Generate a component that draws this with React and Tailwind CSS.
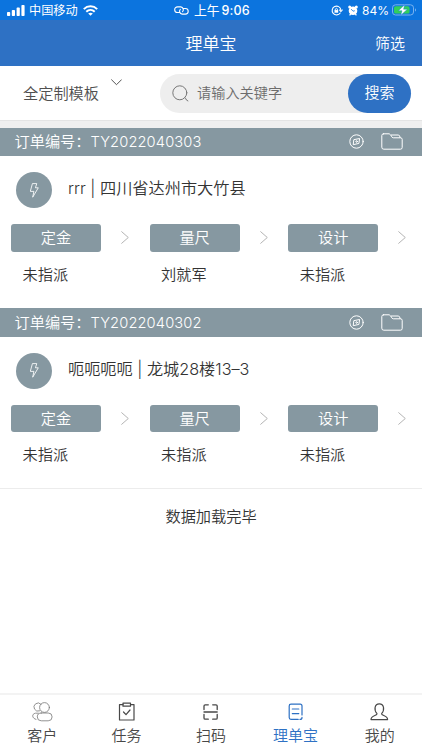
import React from "react";

const svgBase = { fill: "none", stroke: "currentColor", strokeLinecap: "round", strokeLinejoin: "round" };

function StatusBar() {
  return (
    <div className="flex h-5 shrink-0 items-center bg-[#0c74de] text-[12px] leading-5 text-white">
      <div className="flex w-[174px] items-center pl-[7px]">
        <svg className="h-[11px] w-[18px]" viewBox="0 0 18 11" fill="currentColor">
          <rect x="0" y="7" width="3.2" height="4" rx="0.8" />
          <rect x="4.8" y="5" width="3.2" height="6" rx="0.8" />
          <rect x="9.6" y="2.6" width="3.2" height="8.4" rx="0.8" />
          <rect x="14.4" y="0" width="3.2" height="11" rx="0.8" />
        </svg>
        <span className="ml-[4px] pt-px text-[12.2px] font-normal">中国移动</span>
        <svg className="ml-[5px] h-[11px] w-[15px]" viewBox="0 0 15 11" fill="none" stroke="currentColor" strokeWidth="2">
          <path d="M0.8 4.1C4.6 0.4 10.4 0.4 14.2 4.1" />
          <path d="M3.3 6.7C5.7 4.4 9.3 4.4 11.7 6.7" />
          <path d="M7.5 10.8L5.2 8.6C6.5 7.5 8.5 7.5 9.8 8.6Z" fill="currentColor" stroke="none" />
        </svg>
      </div>
      <svg className="h-[9px] w-[15px]" viewBox="0 0 15 9" {...svgBase} strokeWidth="1.1">
        <path d="M5.6 6.5H3.5A2.8 2.8 0 0 1 3.5 0.9H6.8A2.8 2.8 0 0 1 8.6 5.6" />
        <path d="M9.4 2.5H11.4A2.8 2.8 0 0 1 11.4 8.1H8.1A2.8 2.8 0 0 1 6.3 3.4" />
      </svg>
      <span className="ml-[5px] pt-px text-[12.8px] font-normal">上午</span>
      <span className="ml-[2px] pt-px font-['Inter'] text-[12.5px] font-medium tracking-[0.1px]">9:06</span>
      <div className="ml-auto flex items-center pr-[5px]">
        <svg className="h-[11px] w-[12px]" viewBox="0 0 12 11" {...svgBase} strokeWidth="1.1">
          <path d="M9.2 8A4.4 4.4 0 1 1 9.9 4.8" />
          <path d="M8.6 5L10 6.5L11.3 5" />
          <rect x="3.8" y="5.1" width="3.2" height="2.4" fill="currentColor" strokeWidth="0.4" />
          <path d="M4.4 5V4.1A1.1 1.1 0 0 1 6.5 4.1V5" strokeWidth="0.8" />
        </svg>
        <svg className="ml-[5px] h-[11px] w-[10px]" viewBox="0 0 10 11" fill="currentColor">
          <circle cx="5" cy="5.8" r="4.3" />
          <circle cx="1.7" cy="1.9" r="1.5" />
          <circle cx="8.3" cy="1.9" r="1.5" />
          <path d="M1.6 10.4L2.7 8.8M8.4 10.4L7.3 8.8" stroke="currentColor" strokeWidth="1.2" />
          <path d="M3.2 4.1L5 6.2L6.8 5.7" fill="none" stroke="#0c74de" strokeWidth="0.8" />
        </svg>
        <span className="ml-[4px] pt-px font-['Inter'] text-[12px] font-normal">84%</span>
        <svg className="ml-[3px] h-[12px] w-[25px]" viewBox="0 0 25 12">
          <rect x="0.5" y="0.8" width="21" height="10.2" rx="3" fill="none" stroke="#78b2ef" />
          <rect x="2" y="2.3" width="15.5" height="7.2" rx="1.6" fill="#32cf5b" />
          <path d="M23 4.2C24.4 4.8 24.4 7 23 7.6Z" fill="#78b2ef" />
          <path d="M12.6 0.8L6.4 6.7H10L8.8 11.2L15.4 5.2H11.6Z" fill="#fff" stroke="#0c74de" strokeWidth="0.4" />
        </svg>
      </div>
    </div>
  );
}

function Header() {
  return (
    <div className="grid h-[46px] shrink-0 grid-cols-[1fr_auto_1fr] items-center bg-[#2e71c4] text-white">
      <span />
      <h1 className="pt-[3px] text-[17px] leading-6">理单宝</h1>
      <span className="pt-[2px] pr-[17px] text-right text-[15px] leading-6">筛选</span>
    </div>
  );
}

function SearchRow() {
  return (
    <div className="flex h-[55px] shrink-0 items-center border-b border-[#e4e4e4] bg-white">
      <span className="ml-[23px] w-[76px] whitespace-nowrap pt-[2px] text-[15.2px] text-[#505050]">全定制模板</span>
      <svg className="ml-[12px] mb-[22px] h-[7px] w-[11px] text-[#555]" viewBox="0 0 11 7" {...svgBase} strokeWidth="1">
        <path d="M0.6 0.8L5.5 5.7L10.4 0.8" />
      </svg>
      <div className="ml-[38px] flex h-[39px] w-[251px] items-center rounded-full bg-[#eee]">
        <svg className="ml-[12px] h-[17px] w-[17px] text-[#777]" viewBox="0 0 17 17" {...svgBase} strokeWidth="1">
          <circle cx="7.8" cy="7.8" r="7" />
          <path d="M12.9 12.7Q14.2 13.4 14.4 15L15.9 15.9" />
        </svg>
        <span className="ml-[8px] pt-[2px] text-[14.2px] text-[#6c6c6c]">请输入关键字</span>
        <button className="ml-auto h-[39px] w-[63px] rounded-full bg-[#2e71c4] pt-px text-[15px] text-white">搜索</button>
      </div>
    </div>
  );
}

function Chevron() {
  return (
    <svg className="h-[13px] w-[8px] text-[#b4b4b4]" viewBox="0 0 8 13" {...svgBase} strokeWidth="1">
      <path d="M0.7 0.7L7.3 6.5L0.7 12.3" />
    </svg>
  );
}

function Order({ no, title, owners, className }) {
  return (
    <section className={className}>
      <div className="flex h-[28.5px] items-center bg-[#8698a1] text-[15.2px] text-white">
        <span className="ml-[14.5px] w-[76px] whitespace-nowrap pt-[2px]">订单编号：</span>
        <span className="pt-px font-['Inter'] text-[14.7px] tracking-[0.1px]">{no}</span>
        <svg className="ml-auto h-[15px] w-[15px]" viewBox="0 0 15 15" {...svgBase} strokeWidth="1">
          <circle cx="7.5" cy="7.5" r="6.7" />
          <path d="M5.2 5.6L10.6 4.5L9.9 9.4L4.6 10.6Z" />
          <circle cx="7.6" cy="7.5" r="0.8" />
        </svg>
        <svg className="ml-[17px] mr-[19px] h-[17px] w-[22px]" viewBox="0 0 22 17" {...svgBase} strokeWidth="1">
          <path d="M2.5 0.8H8.2Q9.6 1.4 10.4 3.2Q10.8 4.6 12.4 4.8H19.4Q21.2 4.8 21.2 6.4V14.4Q21.2 16.2 19.4 16.2H2.8Q0.8 16.2 0.8 14.2V2.5Q0.8 0.8 2.5 0.8Z" />
          <path d="M10.4 2H17.2Q19 2 19.2 4.6" />
        </svg>
      </div>
      <div className="mt-4 flex items-center">
        <div className="ml-4 flex h-9 w-9 items-center justify-center rounded-full bg-[#8698a1] text-white">
          <svg className="h-[15px] w-[9px]" viewBox="0 0 9 15" {...svgBase} strokeWidth="0.85">
            <path d="M2.8 0.6H6.8L5.4 4.8H8.3L2.7 14.2L3.9 8.4H0.7Z" />
          </svg>
        </div>
        <p className="ml-4 mb-[4px] whitespace-pre font-['Inter','Noto_Sans_CJK_SC',sans-serif] text-[16.2px] leading-6 text-[#333]">{title}</p>
      </div>
      <div className="mt-4 flex pl-[11px]">
        {["定金", "量尺", "设计"].map((step, i) => (
          <div key={step} className="w-[138.6px] shrink-0">
            <div className="flex items-center">
              <div className="flex h-[27.5px] w-[90px] items-center justify-center rounded-[3px] bg-[#8698a1] pt-[2px] text-[15.2px] text-white">{step}</div>
              <div className="ml-5"><Chevron /></div>
            </div>
            <p className="mt-[11px] pl-[11.5px] text-[15.2px] leading-6 text-[#333]">{owners[i]}</p>
          </div>
        ))}
      </div>
    </section>
  );
}

const tabs = [
  {
    label: "客户",
    icon: (
      <g strokeWidth="0.8" stroke="#777">
        <circle cx="12.5" cy="5.5" r="4.9" />
        <rect x="5.3" y="11" width="14.8" height="7.8" rx="3.9" />
        <path d="M7.6 8.9A4.1 4.1 0 1 1 9 2.2" />
        <path d="M4 17.4C0 16.4 -0.6 12 3.4 11.2H6.4" />
      </g>
    ),
  },
  {
    label: "任务",
    icon: (
      <g strokeWidth="1.2">
        <path d="M7 2.6H3.5V18H18V2.6H14.5" />
        <rect x="7" y="1.2" width="7.5" height="3" />
        <path d="M7.5 10L10 12.7L14 8" />
      </g>
    ),
  },
  {
    label: "扫码",
    icon: (
      <g strokeWidth="1.3">
        <path d="M8.3 2.8H5.2Q4 2.8 4 4V7.5M12.7 2.8H16Q17.2 2.8 17.2 4V7.5M8.3 17.2H5.2Q4 17.2 4 16V12.5M12.7 17.2H16Q17.2 17.2 17.2 16V12.5M4 10H17.2" />
      </g>
    ),
  },
  {
    label: "理单宝",
    active: true,
    icon: (
      <g strokeWidth="1.2">
        <path d="M17 13V4Q17 2.2 15.2 2.2H6Q4.2 2.2 4.2 4V15.6Q4.2 17.4 6 17.4H13.2M15 17.4Q17 17.4 17 15.4" />
        <path d="M7.3 7H13.8M7.3 11.6H13.8" />
      </g>
    ),
  },
  {
    label: "我的",
    icon: (
      <g strokeWidth="1.2">
        <path d="M8 11.6C4.8 8.3 5.4 1.8 10.3 1.8S15.8 8.3 12.6 11.6C12.2 14 18.6 13 18.6 17.6H2C2 13 8.4 14 8 11.6Z" />
      </g>
    ),
  },
];

function TabBar() {
  return (
    <nav className="grid h-[57px] shrink-0 grid-cols-5 border-t-2 border-[#f3f3f3] bg-white">
      {tabs.map((t) => (
        <div key={t.label} className={"flex flex-col items-center pt-[7px] " + (t.active ? "text-[#2e71c4]" : "text-[#484848]")}>
          <svg className="h-5 w-[21px]" viewBox="0 0 21 20" {...svgBase}>{t.icon}</svg>
          <span className="mt-[3px] text-[15px] leading-[22px]">{t.label}</span>
        </div>
      ))}
    </nav>
  );
}

export default function App() {
  return (
    <div className="flex h-[750px] w-[422px] flex-col overflow-hidden bg-white font-['Liberation_Sans','Noto_Sans_CJK_SC',sans-serif] font-[350]">
      <StatusBar />
      <Header />
      <SearchRow />
      <div className="h-[6.5px] shrink-0 bg-[#efefef]" />
      <Order className="h-[180.5px] shrink-0" no="TY2022040303" title="rrr | 四川省达州市大竹县" owners={["未指派", "刘就军", "未指派"]} />
      <Order className="h-[181px] shrink-0 border-b border-[#ececec]" no="TY2022040302" title="呃呃呃呃 | 龙城28楼13–3" owners={["未指派", "未指派", "未指派"]} />
      <p className="mt-[16px] text-center text-[15.2px] leading-6 text-[#333]">数据加载完毕</p>
      <div className="flex-1" />
      <TabBar />
    </div>
  );
}
